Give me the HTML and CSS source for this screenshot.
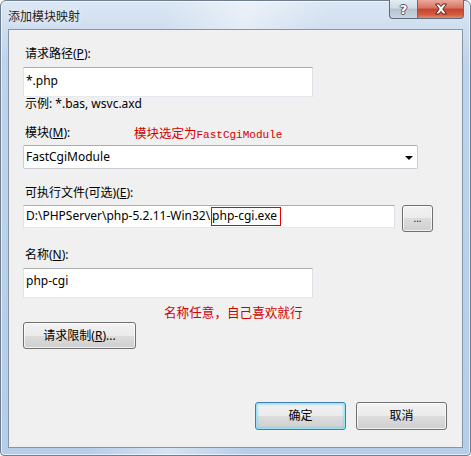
FILE: index.html
```html
<!DOCTYPE html>
<html>
<head>
<meta charset="utf-8">
<link rel="stylesheet" href="styles.css">
</head>
<body>
<div class="window">
  <div class="titlebar">
    <span class="title">添加模块映射</span>
    <div class="caption">
      <div class="cbtn help"><span class="qmark">?</span></div>
      <div class="cbtn close">
        <svg width="14" height="12" viewBox="0 0 14 12">
          <path d="M1.5 1 H5 L7 3.6 L9 1 H12.5 L8.8 6 L12.5 11 H9 L7 8.4 L5 11 H1.5 L5.2 6 Z" fill="#fff" stroke="#5a1f18" stroke-width="1" stroke-linejoin="round"/>
        </svg>
      </div>
    </div>
  </div>
  <div class="client">
    <div class="label">请求路径(<u>P</u>):</div>
    <div class="textbox tall w290"><span class="val">*.php</span></div>
    <div class="hint">示例: *.bas, wsvc.axd</div>
    <div class="label labelrow gap-a"><span class="lbl-fixed">模块(<u>M</u>):</span><span class="note note-mono">模块选定为<span class="mono">FastCgiModule</span></span></div>
    <div class="combo"><span class="val">FastCgiModule</span><span class="arrow"></span></div>
    <div class="label gap-b">可执行文件(可选)(<u>E</u>):</div>
    <div class="filerow">
      <div class="textbox short w372"><span class="val">D:\PHPServer\php-5.2.11-Win32\</span><span class="mark">php-cgi.exe</span></div>
      <div class="btn browse">...</div>
    </div>
    <div class="label gap-c">名称(<u>N</u>):</div>
    <div class="textbox tall w290 name"><span class="val">php-cgi</span></div>
    <div class="note note2">名称任意，自己喜欢就行</div>
    <div class="btn restrict">请求限制(<u>R</u>)...</div>
    <div class="footer">
      <div class="btn dlg default">确定</div>
      <div class="btn dlg">取消</div>
    </div>
  </div>
</div>
</body>
</html>
```

FILE: styles.css
```css
* { box-sizing: border-box; }
html, body { margin: 0; padding: 0; }
body {
  width: 471px;
  height: 456px;
  overflow: hidden;
  font-family: "Noto Sans", "Noto Sans CJK SC", sans-serif;
  font-size: 12px;
  color: #000;
}
.window {
  width: 471px;
  height: 456px;
  display: flex;
  flex-direction: column;
  padding: 0 7px 7px 7px;
  border: 1px solid #6f7e90;
  border-radius: 6px 6px 4px 4px;
  background:
    linear-gradient(100deg, rgba(255,255,255,0) 30%, rgba(255,255,255,0.45) 45%, rgba(255,255,255,0) 60%),
    linear-gradient(to bottom, #dbe7f4 0, #cfdeef 28px, #bed4ec 60px, #b6cde8 100%);
  box-shadow: inset 0 0 0 1px rgba(255,255,255,0.6);
}
.titlebar {
  height: 28px;
  flex: none;
  display: flex;
  align-items: flex-start;
  position: relative;
}
.title {
  font-family: "Noto Sans CJK SC", sans-serif;
  font-size: 12px;
  line-height: 16px;
  margin-top: 7px;
  margin-left: 0;
  color: #1e1e1e;
  text-shadow: 0 0 6px rgba(255,255,255,0.9);
}
.caption {
  position: absolute;
  top: -1px;
  right: -1px;
  display: flex;
}
.cbtn {
  height: 19px;
  display: flex;
  align-items: center;
  justify-content: center;
  border: 1px solid #5d6d80;
  border-top: none;
}
.help {
  width: 28px;
  border-radius: 0 0 0 4px;
  border-right: none;
  background: linear-gradient(to bottom, #e4ebf3 0, #d0dbe6 45%, #b4c3d2 50%, #c9d6e3 100%);
}
.qmark {
  font-family: "DejaVu Sans", sans-serif;
  font-weight: bold;
  font-size: 13px;
  line-height: 13px;
  color: #fff;
  text-shadow: 1px 0 0 #4a5666, -1px 0 0 #4a5666, 0 1px 0 #4a5666, 0 -1px 0 #4a5666;
}
.close {
  width: 47px;
  border-radius: 0 0 4px 0;
  background: linear-gradient(to bottom, #e9a99c 0, #d7725f 45%, #c5432e 50%, #d25a3f 80%, #e08b6c 100%);
}
.close svg { display: block; }
.client {
  flex: 1;
  display: flex;
  flex-direction: column;
  align-items: flex-start;
  background: #f0f0f0;
  border: 1px solid #8596aa;
  padding: 16px 15px 17px 14px;
}
.label {
  height: 16px;
  line-height: 16px;
  padding-left: 2px;
  white-space: nowrap;
}
.labelrow { display: flex; }
.lbl-fixed { width: 109px; flex: none; }
.gap-a { margin-top: 14px; }
.gap-b { margin-top: 16px; }
.gap-c { margin-top: 15px; }
.hint {
  height: 14px;
  line-height: 14px;
  padding-left: 2px;
}
.textbox {
  background: #fff;
  border: 1px solid;
  border-color: #abadb3 #dbdfe6 #e3e9ef #e2e3ea;
  white-space: nowrap;
  overflow: hidden;
  padding-left: 2px;
  display: flex;
}
.val { line-height: 16px; }
.tall { height: 30px; margin-top: 5px; padding-top: 5px; }
.name { padding-top: 4px; }
.w290 { width: 290px; }
.w372 { width: 372px; }
.short { height: 23px; padding-top: 2px; }
.mark {
  display: inline-block;
  height: 19px;
  line-height: 16px;
  margin-top: -1px;
  margin-left: 1px;
  border: 1px solid #e60000;
  padding: 0 3px 0 0;
}
.combo {
  margin-top: 4px;
  width: 395px;
  height: 24px;
  background: #fff;
  border: 1px solid #c9ccd2;
  border-top-color: #a9acb3;
  border-radius: 2px;
  padding-left: 2px;
  display: flex;
  align-items: center;
  position: relative;
}
.arrow {
  position: absolute;
  right: 4px;
  top: 10px;
  width: 0;
  height: 0;
  border-left: 4px solid transparent;
  border-right: 4px solid transparent;
  border-top: 4px solid #000;
}
.note {
  color: #d40000;
  white-space: nowrap;
}
.note-mono {
  font-family: "Noto Sans CJK SC", sans-serif;
  font-size: 12.5px;
}
.mono {
  font-family: "Liberation Mono", monospace;
  font-size: 11px;
}
.note2 {
  margin-top: 6px;
  margin-left: 141px;
  height: 16px;
  line-height: 16px;
  font-family: "Noto Sans CJK SC", sans-serif;
  font-size: 12.6px;
}
.filerow {
  margin-top: 4px;
  display: flex;
  align-items: flex-start;
  gap: 7px;
}
.btn {
  display: flex;
  align-items: center;
  justify-content: center;
  border: 1px solid #707070;
  border-radius: 3px;
  background: linear-gradient(to bottom, #f2f2f2 0, #ebebeb 50%, #dddddd 50%, #cfcfcf 100%);
  box-shadow: inset 0 0 0 1px rgba(255,255,255,0.7);
  white-space: nowrap;
  line-height: 16px;
}
.browse {
  width: 31px;
  height: 27px;
  font-size: 10px;
  padding-bottom: 2px;
  color: #222;
}
.restrict {
  margin-top: 2px;
  width: 113px;
  height: 27px;
}
.footer {
  margin-top: auto;
  align-self: stretch;
  display: flex;
  justify-content: flex-end;
  gap: 10px;
}
.dlg {
  width: 91px;
  height: 28px;
}
.default {
  border-color: #3c7fb1;
  box-shadow: inset 0 0 0 1px #9ee2f5, inset 0 0 2px 2px rgba(72,196,236,0.35);
}
```
